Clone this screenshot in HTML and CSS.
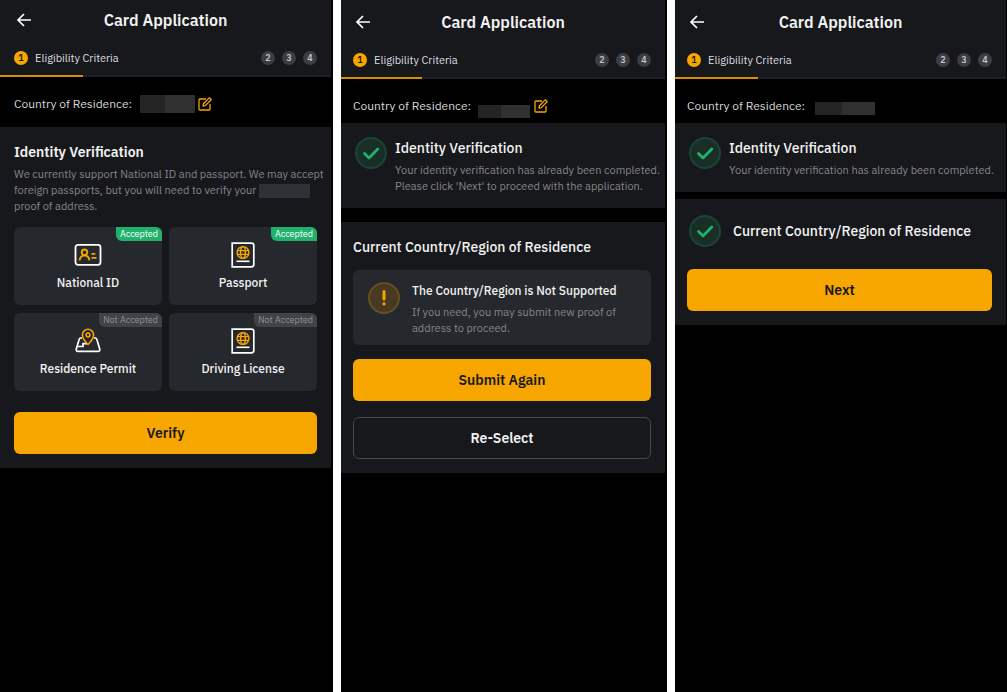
FILE: index.html
```
<!DOCTYPE html>
<html lang="en">
<head>
  <meta charset="UTF-8">
  <meta name="viewport" content="width=device-width, initial-scale=1.0">
  <title>Card Application</title>
  <link rel="stylesheet" href="styles.css">
</head>
<body>
  <!-- shared icons -->
  <svg class="sprite" aria-hidden="true">
    <symbol id="icon-back" viewBox="0 0 16 16">
      <path d="M15 8H2M8 2L2 8l6 6" fill="none" stroke="#fff" stroke-width="1.7"/>
    </symbol>
    <symbol id="icon-edit" viewBox="0 0 14 14">
      <path d="M8 2H1.8Q1 2 1 2.8v9.4q0 .8.8.8h9.4q.8 0 .8-.8V7M5 9l.4-2.3L11 1.1q.4-.3.8 0l1.1 1.1q.3.4 0 .8L7.300 8.600z" fill="none" stroke="#f7a600" stroke-width="1.300" stroke-linejoin="round"/>
    </symbol>
    <symbol id="icon-check" viewBox="0 0 32 32">
      <circle cx="16" cy="16" r="15" fill="#1a2e28" stroke="#1a4634" stroke-width="2"/>
      <path d="M9.500 16.500l4.500 4.500L22.800 12" fill="none" stroke="#20b26c" stroke-width="2.800" stroke-linecap="round" stroke-linejoin="round"/>
    </symbol>
    <symbol id="icon-passport" viewBox="0 0 24 26">
      <path d="M1.200 1.200h19.300q2.300 0 2.300 2.300v19q0 2.300-2.300 2.300H1.200z" fill="none" stroke="#fff" stroke-width="1.700"/>
      <g fill="none" stroke="#f7a600" stroke-width="1.400">
        <circle cx="12" cy="10.500" r="5.900"/>
        <ellipse cx="12" cy="10.500" rx="2.400" ry="5.900"/>
        <path d="M6.600 8.600h10.800M6.600 12.400h10.800"/>
      </g>
      <path d="M5.500 19.300h13" stroke="#fff" stroke-width="1.600"/>
    </symbol>
  </svg>

  <div class="screens">
    <section class="screen screen-upload">
      <header class="header">
        <div class="title-row">
          <button class="back" type="button" aria-label="Back"><svg width="16" height="16"><use href="#icon-back"/></svg></button>
          <h1>Card Application</h1>
        </div>
        <div class="steps">
          <span class="step active">1</span>
          <span class="step-name">Eligibility Criteria</span>
          <span class="step">2</span>
          <span class="step">3</span>
          <span class="step">4</span>
        </div>
        <div class="progress"></div>
      </header>

      <div class="residence">
        <span>Country of Residence:</span>
        <span class="masked masked-first"></span>
        <button class="edit" type="button" aria-label="Edit country"><svg width="14" height="14"><use href="#icon-edit"/></svg></button>
      </div>

      <div class="panel">
        <h2 class="strong">Identity Verification</h2>
        <p>We currently support National ID and passport. We may accept foreign passports, but you will need to verify your <span class="masked masked-inline"></span> <span class="line">proof of address.</span></p>
        <div class="documents">
          <button class="document" type="button">
            <span class="tag accepted">Accepted</span>
            <svg width="28" height="26" viewBox="0 0 28 26">
              <rect x="1.500" y="2.800" width="25" height="20" rx="2.500" fill="none" stroke="#fff" stroke-width="1.800"/>
              <g fill="none" stroke="#f7a600" stroke-width="1.800">
                <circle cx="10.500" cy="10.300" r="2.800"/>
                <path d="M5.500 18.300q.8-4.800 5-5 4.200.2 5 5M17.500 11.800h3.800M17.500 15.800h5"/>
              </g>
            </svg>
            <span>National ID</span>
          </button>
          <button class="document" type="button">
            <span class="tag accepted">Accepted</span>
            <svg width="24" height="26"><use href="#icon-passport"/></svg>
            <span>Passport</span>
          </button>
          <button class="document" type="button">
            <span class="tag">Not Accepted</span>
            <svg width="26" height="26" viewBox="0 0 26 26">
              <path d="M7 10H5.800q-1.200 0-1.600 1.200L1.300 21q-.5 2.300 1.700 2.300h20q2.200 0 1.700-2.300l-2.900-9.800Q21.400 10 20.200 10H19M2.500 18.500H8v-2.800h4" fill="none" stroke="#fff" stroke-width="1.700"/>
              <path d="M13 16.500Q7.400 11 7.400 6.800a5.600 5.600 0 0 1 11.200 0Q18.600 11 13 16.500z" fill="#25282c" stroke="#f7a600" stroke-width="1.600"/>
              <circle cx="13" cy="7" r="1.900" fill="none" stroke="#f7a600" stroke-width="1.500"/>
            </svg>
            <span>Residence Permit</span>
          </button>
          <button class="document" type="button">
            <span class="tag">Not Accepted</span>
            <svg width="24" height="26"><use href="#icon-passport"/></svg>
            <span>Driving License</span>
          </button>
        </div>
        <button class="button" type="button">Verify</button>
      </div>
    </section>

    <section class="screen screen-retry">
      <header class="header">
        <div class="title-row">
          <button class="back" type="button" aria-label="Back"><svg width="16" height="16"><use href="#icon-back"/></svg></button>
          <h1>Card Application</h1>
        </div>
        <div class="steps">
          <span class="step active">1</span>
          <span class="step-name">Eligibility Criteria</span>
          <span class="step">2</span>
          <span class="step">3</span>
          <span class="step">4</span>
        </div>
        <div class="progress"></div>
      </header>

      <div class="residence">
        <span>Country of Residence:</span>
        <span class="masked masked-second"></span>
        <button class="edit" type="button" aria-label="Edit country"><svg width="14" height="14"><use href="#icon-edit"/></svg></button>
      </div>

      <div class="panel status">
        <svg width="32" height="32"><use href="#icon-check"/></svg>
        <div>
          <h2>Identity Verification</h2>
          <p>Your identity verification has already been completed. Please click 'Next' to proceed with the application.</p>
        </div>
      </div>

      <div class="panel">
        <h2>Current Country/Region of Residence</h2>
        <div class="notice">
          <svg width="32" height="32" viewBox="0 0 32 32">
            <circle cx="16" cy="16" r="15" fill="#483a22" stroke="#66501f" stroke-width="2"/>
            <path d="M16 9.500v7.500M16 21.800v.1" stroke="#f7a600" stroke-width="3" stroke-linecap="round"/>
          </svg>
          <div>
            <h3>The Country/Region is Not Supported</h3>
            <p>If you need, you may submit new proof of address to proceed.</p>
          </div>
        </div>
        <button class="button" type="button">Submit Again</button>
        <button class="button outline" type="button">Re-Select</button>
      </div>
    </section>

    <section class="screen screen-done">
      <header class="header">
        <div class="title-row">
          <button class="back" type="button" aria-label="Back"><svg width="16" height="16"><use href="#icon-back"/></svg></button>
          <h1>Card Application</h1>
        </div>
        <div class="steps">
          <span class="step active">1</span>
          <span class="step-name">Eligibility Criteria</span>
          <span class="step">2</span>
          <span class="step">3</span>
          <span class="step">4</span>
        </div>
        <div class="progress"></div>
      </header>

      <div class="residence">
        <span>Country of Residence:</span>
        <span class="masked masked-third"></span>
      </div>

      <div class="panel status">
        <svg width="32" height="32"><use href="#icon-check"/></svg>
        <div>
          <h2>Identity Verification</h2>
          <p>Your identity verification has already been completed.</p>
        </div>
      </div>

      <div class="panel">
        <div class="region">
          <svg width="32" height="32"><use href="#icon-check"/></svg>
          <h2>Current Country/Region of Residence</h2>
        </div>
        <button class="button" type="button">Next</button>
      </div>
    </section>
  </div>
</body>
</html>
```
FILE: styles.css
```
* {
  box-sizing: border-box;
}
body {
  margin: 0;
  background: #fff;
  color: #f2f2f2;
  font-family: "IBM Plex Sans", "Noto Sans", sans-serif;
  font-size: 12px;
}
h1, h2, h3, p {
  margin: 0;
}
button {
  padding: 0;
  border: none;
  background: none;
  color: inherit;
  font: inherit;
  cursor: pointer;
}
svg {
  display: block;
  flex: none;
}
.sprite {
  position: absolute;
  width: 0;
  height: 0;
}
.screens {
  display: grid;
  grid-template-columns: 333fr 326fr 332fr;
  gap: 8px;
  min-height: 100vh;
}
.screen {
  background: #000;
  padding-right: 2px;
}

/* header and steps */
.header {
  background: #17181c;
}
.title-row {
  display: grid;
  grid-template-columns: 16px 1fr 16px;
  align-items: center;
  height: 40px;
  padding: 0 16px;
}
h1 {
  font-size: 16px;
  font-weight: 600;
  line-height: 20px;
  text-align: center;
}
.steps {
  display: flex;
  align-items: center;
  gap: 7px;
  height: 35px;
  padding: 0 14px;
  font-size: 11px;
}
.step {
  width: 14px;
  border-radius: 50%;
  background: #3b3d42;
  color: #c4c5c8;
  font-size: 9px;
  font-weight: 600;
  line-height: 14px;
  text-align: center;
}
.step.active {
  background: #f7a600;
  color: #17181c;
}
.step-name {
  flex: 1;
  color: #dedee0;
}
.progress {
  height: 2px;
  background: linear-gradient(to right, #d48f04 25%, #1e2023 25%);
}

/* country row */
.residence {
  display: flex;
  align-items: center;
  padding: 17px 14px 13px;
  color: #d6d6d6;
  line-height: 20px;
}
.masked {
  background: linear-gradient(to right, #242424 45%, #303030 45%);
}
.masked-first {
  width: 55px;
  height: 18px;
  margin: 0 3px 0 8px;
}
.masked-second {
  width: 52px;
  height: 13px;
  margin: 10px 4px 0 7px;
}
.masked-third {
  width: 60px;
  height: 13px;
  margin: 4px 0 0 10px;
}
.masked-inline {
  display: inline-block;
  width: 51px;
  height: 14px;
  background: #303136;
  vertical-align: middle;
}

/* panels */
.panel {
  background: #17181c;
  padding: 14px;
}
h2 {
  font-size: 14px;
  font-weight: 500;
  line-height: 22px;
}
h2.strong {
  font-weight: 600;
}
p {
  color: #85868a;
  font-size: 11px;
  line-height: 16px;
}
.panel > p {
  margin: 3px -12px 0 0;
}
.line {
  display: block;
}
.status {
  display: flex;
  gap: 8px;
}
.status p {
  margin-top: 3px;
}
.button {
  display: block;
  width: 100%;
  height: 42px;
  border-radius: 6px;
  background: #f7a600;
  color: #17181c;
  font-size: 14px;
  font-weight: 600;
}
.button.outline {
  border: 1px solid #45474c;
  background: none;
  color: #f2f2f2;
}

/* document cards */
.documents {
  display: grid;
  grid-template-columns: 1fr 1fr;
  gap: 8px 7px;
  margin: 13px 0 21px;
}
.document {
  position: relative;
  display: flex;
  flex-direction: column;
  align-items: center;
  gap: 5px;
  height: 78px;
  padding-top: 15px;
  border-radius: 6px;
  background: #25282c;
  font-size: 12px;
  font-weight: 500;
  line-height: 20px;
}
.tag {
  position: absolute;
  top: 0;
  right: 0;
  padding: 0 4px;
  border-radius: 0 6px 0 6px;
  background: #404347;
  color: #909195;
  font-size: 9px;
  font-weight: 400;
  line-height: 14px;
}
.tag.accepted {
  background: #20b26c;
  color: #fff;
}

/* unsupported region notice */
.notice {
  display: flex;
  gap: 12px;
  margin: 12px 0 14px;
  padding: 12px 15px 9px;
  border-radius: 6px;
  background: #25282c;
}
h3 {
  font-size: 12px;
  font-weight: 500;
  line-height: 18px;
}
.notice p {
  margin-top: 4px;
}

/* second and third screens */
.screen-retry .header,
.screen-done .header {
  padding-top: 2px;
}
.screen-retry .title-row,
.screen-done .title-row {
  padding: 0 14px;
}
.screen-retry .steps,
.screen-done .steps,
.screen-retry .panel,
.screen-done .panel {
  padding-left: 12px;
}
.screen-retry .residence,
.screen-done .residence {
  padding: 17px 12px 7px;
}
.screen-retry .residence {
  height: 44px;
}
.screen-retry .status,
.screen-done .status {
  padding: 14px 4px 14px 14px;
}
.screen-retry .status {
  margin-bottom: 14px;
}
.screen-retry .outline {
  margin-top: 16px;
}
.screen-done {
  padding-right: 1px;
}
.screen-done .status {
  margin-bottom: 7px;
}
.region {
  display: flex;
  align-items: center;
  gap: 12px;
  padding: 2px;
  margin-bottom: 20px;
}
```
